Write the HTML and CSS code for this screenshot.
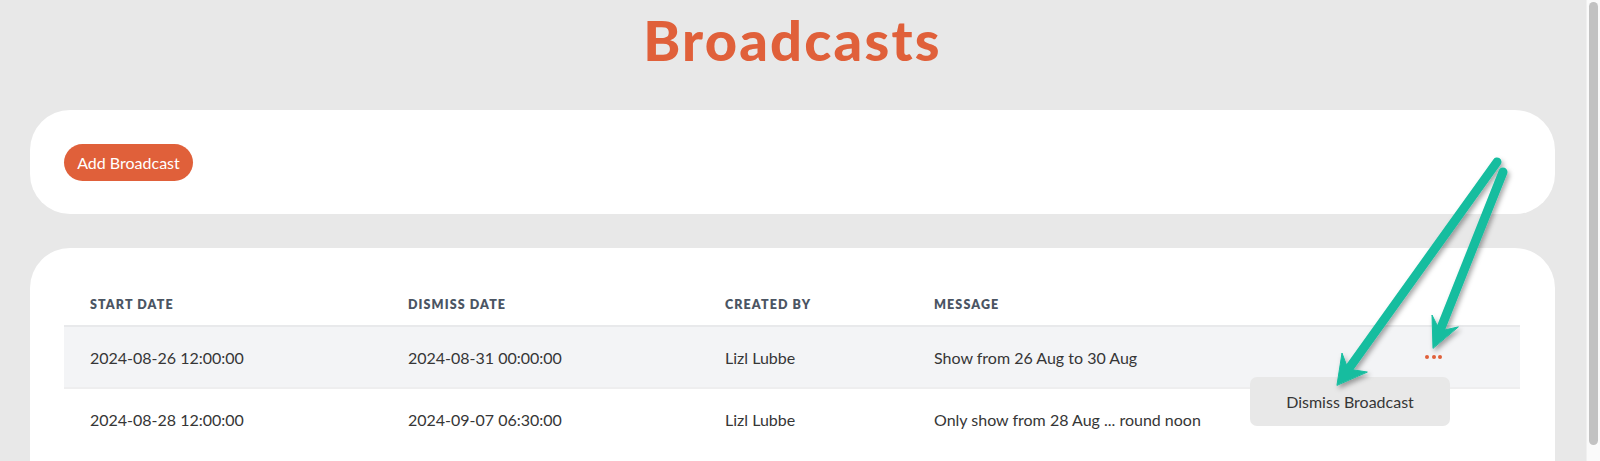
FILE: index.html
```html
<!DOCTYPE html>
<html>
<head>
<meta charset="utf-8">
<link rel="stylesheet" href="styles.css">
</head>
<body>
<div class="page">
  <h1 class="title">Broadcasts</h1>
  <section class="card card-top">
    <button class="btn-add">Add Broadcast</button>
  </section>
  <section class="card card-table">
    <table class="grid">
      <thead>
        <tr>
          <th class="c1">Start Date</th>
          <th class="c2">Dismiss Date</th>
          <th class="c3">Created By</th>
          <th class="c4">Message</th>
          <th class="c5"></th>
        </tr>
      </thead>
      <tbody>
        <tr class="row-hover">
          <td>2024-08-26 12:00:00</td>
          <td>2024-08-31 00:00:00</td>
          <td>Lizl Lubbe</td>
          <td>Show from 26 Aug to 30 Aug</td>
          <td class="actions">
            <span class="dots"><i></i><i></i><i></i></span>
            <div class="menu">Dismiss Broadcast</div>
          </td>
        </tr>
        <tr>
          <td>2024-08-28 12:00:00</td>
          <td>2024-09-07 06:30:00</td>
          <td>Lizl Lubbe</td>
          <td>Only show from 28 Aug ... round noon</td>
          <td></td>
        </tr>
      </tbody>
    </table>
  </section>
  <svg class="arrows" width="1585" height="461" viewBox="0 0 1585 461">
    <defs>
      <filter id="sh" x="-20%" y="-20%" width="140%" height="140%">
        <feDropShadow dx="2" dy="3" stdDeviation="2.5" flood-color="#000" flood-opacity="0.35"/>
      </filter>
    </defs>
    <g filter="url(#sh)" fill="#15bd9f" stroke="#15bd9f" stroke-linecap="round" stroke-linejoin="round">
      <line x1="1497" y1="162" x2="1350" y2="367" stroke-width="9"/>
      <polygon points="1337,385 1342,353 1348,369 1367,372" stroke-width="1"/>
      <line x1="1503" y1="172" x2="1441" y2="328" stroke-width="9"/>
      <polygon points="1433,348 1432,315 1440,331 1458,327" stroke-width="1"/>
    </g>
  </svg>
</div>
<div class="scrollbar"><div class="thumb"></div></div>
</body>
</html>
```
FILE: styles.css
```css
html, body {
  margin: 0;
  padding: 0;
}
body {
  background: #e8e8e8;
  display: flex;
  height: 461px;
  overflow: hidden;
  font-family: "Lato", "Liberation Sans", sans-serif;
  color: #363636;
}
.page {
  flex: 1;
  position: relative;
  padding: 0 31px 0 30px;
}
.title {
  margin: 0 0 42px;
  padding-top: 12px;
  font-size: 56px;
  line-height: 56px;
  font-weight: 900;
  color: #e0603a;
  text-align: center;
  letter-spacing: 2.2px;
}
.card {
  background: #fff;
  border-radius: 40px;
  padding: 34px;
}
.card-top {
  height: 104px;
  box-sizing: border-box;
  margin-bottom: 34px;
}
.btn-add {
  display: block;
  height: 37px;
  width: 129px;
  border: none;
  border-radius: 19px;
  background: #e0603a;
  color: #fff;
  font-family: "Lato", "Liberation Sans", sans-serif;
  font-size: 16px;
  padding: 0;
}
.card-table {
  height: 300px;
  box-sizing: border-box;
}
.grid {
  width: 1456px;
  border-collapse: collapse;
  table-layout: fixed;
}
.grid th {
  box-sizing: border-box;
  height: 44px;
  text-align: left;
  text-transform: uppercase;
  font-size: 12.5px;
  font-weight: 800;
  letter-spacing: 1.1px;
  color: #4b5563;
  padding: 2px 0 0 26px;
  vertical-align: middle;
}
.c1 { width: 318px; }
.c2 { width: 317px; }
.c3 { width: 209px; }
.c4 { width: 466px; }
.grid td {
  box-sizing: border-box;
  height: 62px;
  padding: 0 0 0 26px;
  font-size: 16px;
  color: #363636;
  vertical-align: middle;
  border-top: 2px solid #e8e9eb;
  white-space: nowrap;
}
.row-hover td {
  background: #f3f4f6;
}
.grid tbody tr:last-child td {
  border-top-color: #eeeeef;
}
.actions {
  position: relative;
}
.dots {
  display: flex;
  gap: 2.5px;
  margin-left: 25px;
  margin-top: 0;
}
.dots i {
  width: 4px;
  height: 4px;
  border-radius: 50%;
  background: #e0603a;
}
.menu {
  position: absolute;
  top: 50px;
  left: -124px;
  width: 200px;
  height: 49px;
  line-height: 49px;
  background: #e8e8e8;
  border-radius: 7px;
  text-align: center;
  font-size: 16px;
  color: #363636;
  z-index: 2;
}
.arrows {
  position: absolute;
  left: 0;
  top: 0;
  pointer-events: none;
  z-index: 3;
}
.scrollbar {
  width: 14px;
  height: 461px;
  background: #fafafa;
  border-left: 1px solid #f0f0f0;
  padding: 2px 0 0 2px;
  box-sizing: border-box;
}
.thumb {
  width: 9px;
  height: 443px;
  border-radius: 5px;
  background: #c2c2c2;
}
```
